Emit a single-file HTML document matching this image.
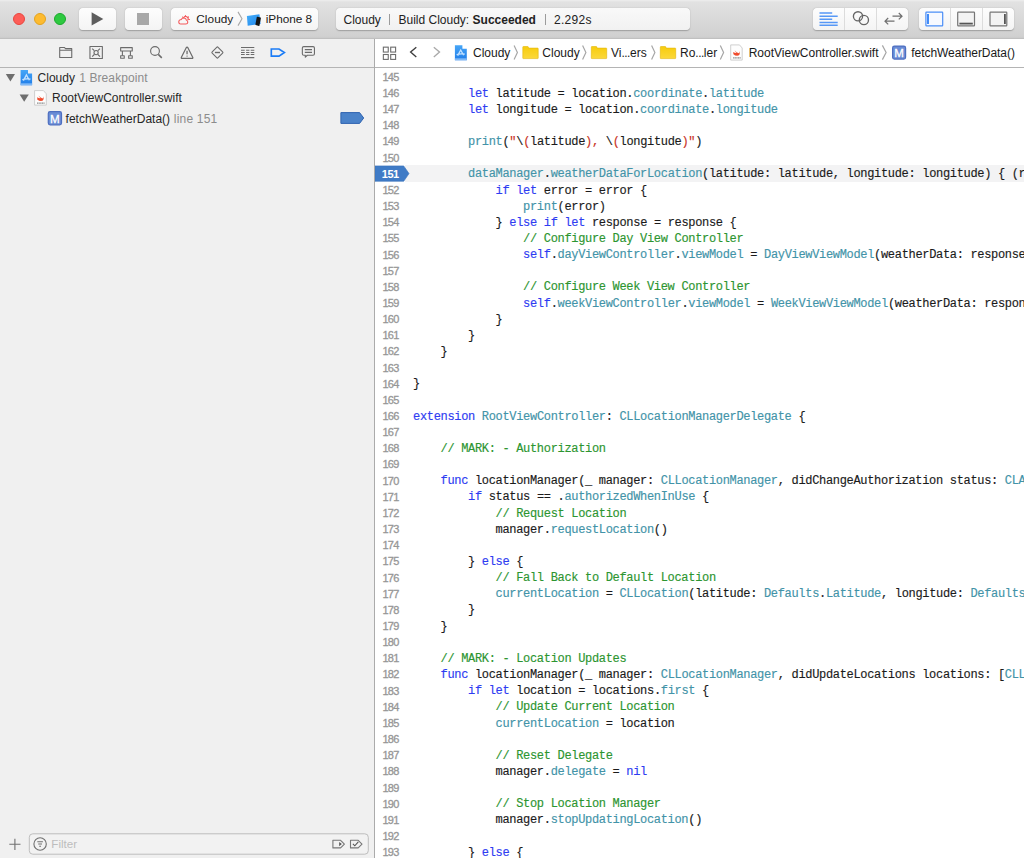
<!DOCTYPE html>
<html><head><meta charset="utf-8">
<style>
*{margin:0;padding:0;box-sizing:border-box}
html,body{width:1024px;height:858px;overflow:hidden;background:#fff;font-family:"Liberation Sans",sans-serif}
.abs{position:absolute}
svg{position:absolute;overflow:visible}
#toolbar{position:absolute;z-index:5;left:0;top:0;width:1024px;height:39px;background:linear-gradient(#eeeeee 0px,#e2e2e2 2px,#d1d1d1 36px,#cacaca 38px);border-bottom:1px solid #c0c0c0}
.light{position:absolute;top:13.3px;width:12px;height:12px;border-radius:50%}
.btn{position:absolute;top:8.2px;height:22px;background:linear-gradient(#fdfdfd,#f4f4f4);border-radius:4px;box-shadow:0 0.6px 1.3px rgba(0,0,0,.26),0 0 0.5px rgba(0,0,0,.2)}
.div{position:absolute;top:0;width:1px;height:100%;background:#dcdcdc}
#nav{position:absolute;left:0;top:38px;width:375px;height:820px;z-index:0;background:#f0f0f0;border-right:1px solid #ababab}
#navtabs{position:absolute;left:0;top:0;width:374px;height:30px;border-bottom:1px solid #b4b4b4}
.row{position:absolute;font-size:12px;color:#262626;white-space:nowrap}
.gray{color:#8c8c8c}
#jump{position:absolute;left:375px;top:38px;width:649px;height:30px;background:#fff;border-bottom:1px solid #b4b4b4}
.jt{position:absolute;top:8.4px;font-size:12px;color:#1a1a1a;white-space:nowrap}
#editor{position:absolute;left:375px;top:68px;width:649px;height:790px;background:#fff;overflow:hidden}
#lines{position:absolute;left:0;top:0;width:649px}
.ln{position:absolute;left:0;width:649px;height:16.15px;line-height:16.15px;white-space:pre;font-family:"Liberation Mono",monospace;font-size:12px;letter-spacing:-0.32px;color:#1b1b1b;-webkit-text-stroke:0.15px currentColor}
.ln.cur::before{content:"";position:absolute;left:30px;right:0;top:0;bottom:0;background:#f3f3f4}
.num{position:absolute;left:0;top:0.32px;width:23.5px;text-align:right;color:#969696;font-family:"Liberation Sans",sans-serif;font-size:11px;letter-spacing:-0.75px;-webkit-text-stroke:0.3px currentColor}
.code{position:absolute;left:38px;top:0.93px}
.k{color:#2e3cf2}
.t{color:#4293a8}
.c{color:#2c9530}
.s{color:#c93224}
</style></head><body>
<div id="toolbar">
  <div class="light" style="left:13.4px;background:#fd5d57;border:0.5px solid #e8463f"></div>
  <div class="light" style="left:33.7px;background:#fdbb30;border:0.5px solid #e3a31e"></div>
  <div class="light" style="left:53.9px;background:#2ec940;border:0.5px solid #1aa92c"></div>
  <div class="btn" style="left:79.1px;width:37px"><svg width="36" height="22" style="left:0;top:0"><path d="M12.6 4.3 L24.3 10.9 L12.6 17.6Z" fill="#5d5d5d"/></svg></div>
  <div class="btn" style="left:124.8px;width:37px"><div class="abs" style="left:12.5px;top:5.2px;width:12px;height:11.6px;background:#a8a8a8"></div></div>
  <div class="btn" style="left:170.5px;width:147.5px">
    <svg width="20" height="20" style="left:0;top:0"><g fill="none" stroke="#f4595b" stroke-width="1.25" stroke-linecap="round" transform="translate(7.4 13.2) scale(0.86) translate(-6.5 -12.5)"><path d="M9.5 15.8 H15.4 A2.3 2.3 0 0 0 16 11.3 A3.2 3.2 0 0 0 10 10.6 A2.6 2.6 0 0 0 9.5 15.8 Z" transform="translate(-0.2 0)"/><path d="M12.6 8.6 A2.6 2.6 0 0 1 17.6 10.8"/><path d="M14.7 5.9 V6.9 M11.3 7.6 L11.9 8.1 M18.2 7.4 L17.6 8 M19.4 10.5 H18.5"/></g></svg>
    <span class="abs" style="left:25.8px;top:4.2px;font-size:11.8px;color:#1b1b1b;letter-spacing:0.05px">Cloudy</span>
    <svg width="10" height="20" style="left:66px;top:3px"><path d="M1 0.9 L5 7.8 L1 14.6" fill="none" stroke="#a8a8a8" stroke-width="1.1"/></svg>
    <svg width="18" height="16" style="left:75.5px;top:4.8px"><defs><linearGradient id="ipg" x1="0" y1="0" x2="1" y2="1"><stop offset="0" stop-color="#45aef8"/><stop offset="1" stop-color="#1f86ee"/></linearGradient></defs><path d="M0.9 2.9 L13.4 1.2 L14.6 10.9 L1.7 12.7Z" fill="url(#ipg)"/><path d="M10.8 4 Q11 3.7 11.4 3.8 L14.6 4.6 Q15 4.8 14.9 5.2 L13.4 12.7 Q13.3 13.1 12.9 13 L9.7 12 Q9.3 11.9 9.4 11.5Z" fill="#141414"/></svg>
    <span class="abs" style="left:95.3px;top:4.3px;font-size:11.8px;color:#1b1b1b;letter-spacing:-0.05px">iPhone 8</span>
  </div>
  <div class="btn" style="left:335.5px;width:354px;background:linear-gradient(#f9f9f9,#f1f1f1)">
    <span class="abs" style="left:8px;top:5.1px;font-size:12px;color:#222;white-space:nowrap">Cloudy</span>
    <span class="abs" style="left:53.3px;top:5.4px;width:1px;height:11px;background:#9b9b9b"></span>
    <span class="abs" style="left:63px;top:5.1px;font-size:12px;color:#222;white-space:nowrap">Build Cloudy: <b>Succeeded</b></span>
    <span class="abs" style="left:209.3px;top:5.4px;width:1px;height:11px;background:#9b9b9b"></span>
    <span class="abs" style="left:218.5px;top:5.1px;font-size:12px;color:#222;white-space:nowrap;letter-spacing:0.3px">2.292s</span>
  </div>
  <div class="btn" style="left:812.5px;width:95.5px">
    <div class="div" style="left:31.5px"></div><div class="div" style="left:63.5px"></div>
    <svg width="30" height="20" style="left:0;top:0"><g stroke="#5798f6" stroke-width="1.5"><path d="M6.5 5 H19.2 M6.5 8.2 H24.7 M6.5 11.2 H19.2 M6.5 14.4 H24.7 M6.5 17.3 H24.7"/></g></svg>
    <svg width="30" height="20" style="left:32px;top:0"><g fill="none" stroke="#666" stroke-width="1.35"><circle cx="13" cy="8.3" r="4.6"/><circle cx="18.9" cy="12" r="4.6"/></g></svg>
    <svg width="30" height="20" style="left:64px;top:0"><g fill="none" stroke="#6f6f6f" stroke-width="1.2"><path d="M15.5 8.2 H25 M21.8 5 L25 8.2 L21.8 11.4"/><path d="M8 13.2 H17.5 M11.2 10 L8 13.2 L11.2 16.4"/></g></svg>
  </div>
  <div class="btn" style="left:918.5px;width:95px">
    <div class="div" style="left:31.5px"></div><div class="div" style="left:63.5px"></div>
    <svg width="30" height="20" style="left:-0.5px;top:-0.4px"><rect x="7.9" y="4.2" width="16.8" height="13.7" rx="0.6" fill="#f6f9ff" stroke="#4a8ef7" stroke-width="1.2"/><path d="M10 6 V16" stroke="#2f7ff6" stroke-width="1.8"/></svg>
    <svg width="30" height="20" style="left:31.5px;top:-0.4px"><rect x="7.7" y="4.2" width="16.8" height="13.7" rx="0.6" fill="#f3f3f3" stroke="#767676" stroke-width="1.2"/><path d="M9.4 15.6 H22.8" stroke="#555" stroke-width="1.8"/></svg>
    <svg width="30" height="20" style="left:63.5px;top:-0.4px"><rect x="8" y="4.2" width="16.8" height="13.7" rx="0.6" fill="#f3f3f3" stroke="#767676" stroke-width="1.2"/><path d="M22.9 6 V16" stroke="#555" stroke-width="1.8"/></svg>
  </div>
</div>
<div id="nav">
  <div id="navtabs">
<svg width="374" height="30" style="left:0;top:0"><g fill="none" stroke="#6b6b6b" stroke-width="1.1" stroke-linejoin="round">
<path d="M59.7 19.55 V9.45 H64.3 L65.5 10.65 H71.75 V19.55 Z M59.7 12.3 H71.75"/>
<rect x="89.95" y="8.45" width="12.4" height="12.1"/>
<circle cx="96.1" cy="14.6" r="2.1"/>
<path d="M92.2 10.6 L94.3 12.7 M100 10.6 L97.9 12.7 M92.2 18.6 L94.3 16.5 M100 18.6 L97.9 16.5"/>
<rect x="120.65" y="9.65" width="11.6" height="3.3"/>
<rect x="120.65" y="17.75" width="3.6" height="2.5"/>
<rect x="128.65" y="17.75" width="3.6" height="2.5"/>
<path d="M122.4 12.95 V17.75 M130.4 12.95 V17.75"/>
<circle cx="155" cy="13" r="4.4"/>
<path d="M158.3 16.4 L161.8 19.9" stroke-width="1.5"/>
<path d="M186.1 9.9 Q187.05 8.4 188 9.9 L192.7 19.2 Q193.3 20.4 192 20.4 H182.1 Q180.8 20.4 181.4 19.2 Z" stroke-width="1.2"/>
<path d="M187.05 12.8 V16.3" stroke-width="1.3"/><circle cx="187.05" cy="18.1" r="0.65" fill="#6b6b6b" stroke="none"/>
<path d="M212.2 13.8 L216.7 9.3 Q217.4 8.6 218.1 9.3 L222.6 13.8 Q223.3 14.5 222.6 15.2 L218.1 19.7 Q217.4 20.4 216.7 19.7 L212.2 15.2 Q211.5 14.5 212.2 13.8 Z"/>
<path d="M214.9 14.5 H220" stroke-width="1.4"/>
<path d="M241 9.4 H254.3 M241 19.6 H254.3 M241 12.3 H244.7 M246.1 12.3 H249.4 M250.7 12.3 H254.3 M241 14.4 H244.7 M246.1 14.4 H249.4 M250.7 14.4 H254.3 M241 16.4 H244.7 M246.1 16.4 H249.4 M250.7 16.4 H254.3" stroke-width="1.05"/>
<path d="M303.8 8.65 H313 Q314.45 8.65 314.45 10.1 V15.8 Q314.45 17.25 313 17.25 H307.3 L305.3 19.2 V17.25 H303.8 Q302.35 17.25 302.35 15.8 V10.1 Q302.35 8.65 303.8 8.65 Z"/>
<path d="M304.8 11.6 H312 M304.8 14.4 H312" stroke-width="1.2"/>
</g>
<path d="M271.3 10.95 H279 L284.4 14.55 L279 18.15 H271.3 Z" fill="none" stroke="#1b7cf6" stroke-width="1.65" stroke-linejoin="miter"/>
</svg>
  </div>
<svg width="374" height="820" style="left:0;top:0">
<path d="M5.8 36.1 H15 L10.4 43.4 Z" fill="#6e6e6e"/>
<path d="M19.6 56.5 H28.8 L24.2 63.8 Z" fill="#6e6e6e"/>
<defs><linearGradient id="ag" x1="0" y1="0" x2="0" y2="1"><stop offset="0" stop-color="#46a6f7"/><stop offset="1" stop-color="#1f7ce8"/></linearGradient></defs>
<path d="M20.6 32.1 H28 V35.6 H32.1 V47.2 H20.6 Z" fill="url(#ag)"/>
<path d="M20.6 45.3 H32.1 V47.2 H20.6Z" fill="#80b9f6"/>
<path d="M23.4 42.6 L26.4 36.9 L29.3 42.3 M22.3 41.6 Q26.4 40.4 30.5 41.2" fill="none" stroke="#c4e2ff" stroke-width="1.3"/>
<path d="M34.6 52.6 H43.4 L46.3 55.8 V67.1 H34.6 Z" fill="#fdfdfd" stroke="#c4c4c4" stroke-width="0.8"/>
<path d="M37 61.2 Q40.2 64 42.9 62.6 Q44 61.4 43.5 58.2 Q43.4 60 42.4 60.6 Q40.2 59.4 38.4 57.5 Q39.4 59.1 40.5 60.3 Q39 60.5 37 59.2 Q37.8 60.6 37 61.2Z" fill="#f04a2c"/>
<path d="M37 65.1 H44.6" stroke="#8a8a8a" stroke-width="1.2" stroke-dasharray="1.2 0.4"/>
<rect x="48.3" y="73.6" width="13.2" height="13.2" rx="1.8" fill="#6a8cd5" stroke="#4d6ec0" stroke-width="1.2"/>
<text x="54.9" y="84.5" font-family="Liberation Sans" font-size="11.6" fill="#fff" stroke="#fff" stroke-width="0.3" text-anchor="middle">M</text>
<path d="M340.9 74.6 H359.6 L363.7 80 L359.6 85.4 H340.9 Z" fill="#4a82c9" stroke="#2f63b0" stroke-width="1"/>
<g fill="none" stroke="#707070" stroke-width="1.1"><path d="M9.3 806.3 H20.5 M14.9 800.7 V811.9"/></g>
<rect x="29.3" y="795.8" width="339" height="20.4" rx="3.5" fill="#f2f2f2" stroke="#bdbdbd" stroke-width="1"/>
<circle cx="40.1" cy="806" r="6.2" fill="none" stroke="#707070" stroke-width="1.1"/>
<path d="M37.3 803.8 H42.9 M38.2 806 H42 M39.2 808.3 H41" stroke="#707070" stroke-width="1.1"/>
<path d="M332.9 802.3 H340.6 L344.4 806.1 L340.6 809.9 H332.9 Z" fill="none" stroke="#777" stroke-width="1.1" stroke-linejoin="round"/>
<path d="M339.2 803.9 L341.8 806.1 L339.2 808.3 Z" fill="#555"/>
<path d="M350.5 802.3 H358.2 L362 806.1 L358.2 809.9 H350.5 Z" fill="none" stroke="#777" stroke-width="1.1" stroke-linejoin="round"/>
<path d="M352.9 805.8 L354.8 807.8 L358.3 803.8" fill="none" stroke="#555" stroke-width="1.1"/>
</svg>
  <div class="row" style="left:37.6px;top:32.7px">Cloudy<span class="gray" style="position:absolute;left:41.6px;letter-spacing:0.1px">1 Breakpoint</span></div>
  <div class="row" style="left:52px;top:53.1px">RootViewController.swift</div>
  <div class="row" style="left:65.6px;top:73.6px">fetchWeatherData()<span class="gray" style="position:absolute;left:108.2px;letter-spacing:0.2px">line 151</span></div>
  <div class="row" style="left:51.3px;top:798.7px;color:#bdbdbd;font-size:11.6px">Filter</div>

</div>
<div id="jump">
<svg width="649" height="30" style="left:0;top:0">
<g fill="none" stroke="#6c6c6c" stroke-width="1.1">
<rect x="8.35" y="9.15" width="4.9" height="4.9"/><rect x="15.7" y="9.15" width="4.9" height="4.9"/>
<rect x="8.35" y="16.5" width="4.9" height="4.9"/><rect x="15.7" y="16.5" width="4.9" height="4.9"/>
<path d="M41.3 9.2 L35.6 14.1 L41.3 19" stroke="#3c3c3c" stroke-width="1.35"/>
<path d="M58.8 9.2 L64.5 14.1 L58.8 19" stroke="#a9a9a9" stroke-width="1.35"/>
<path d="M139.1 7.4 L142.4 14.5 L139.1 21.6" stroke="#a6a6a6" stroke-width="1.2"/>
<path d="M207.6 7.4 L210.9 14.5 L207.6 21.6" stroke="#a6a6a6" stroke-width="1.2"/>
<path d="M276.6 7.4 L279.9 14.5 L276.6 21.6" stroke="#a6a6a6" stroke-width="1.2"/>
<path d="M345.3 7.4 L348.6 14.5 L345.3 21.6" stroke="#a6a6a6" stroke-width="1.2"/>
<path d="M507.4 7.4 L511.1 14.5 L507.4 21.6" stroke="#a6a6a6" stroke-width="1.2"/>
</g>
<path d="M79.9 7.2 H87.4 V10.8 H91.8 V22.2 H79.9 Z" fill="url(#ag2)"/>
<defs><linearGradient id="ag2" x1="0" y1="0" x2="0" y2="1"><stop offset="0" stop-color="#46a6f7"/><stop offset="1" stop-color="#1f7ce8"/></linearGradient>
<linearGradient id="fg" x1="0" y1="0" x2="0" y2="1"><stop offset="0" stop-color="#f7cc0c"/><stop offset="1" stop-color="#fbd83a"/></linearGradient></defs>
<path d="M82.7 17.6 L85.7 12 L88.6 17.3 M81.6 16.6 Q85.7 15.4 89.8 16.2" fill="none" stroke="#c4e2ff" stroke-width="1.3"/>
<path d="M79.9 20.3 H91.8 V22.2 H79.9Z" fill="#80b9f6"/>
<path d="M147.8 9.1 Q147.8 8.5 148.4 8.5 H152.7 Q153.2 8.5 153.4 9.1 L153.6 10.1 H162.7 Q163.2 10.1 163.2 10.6 V20.1 Q163.2 20.6 162.7 20.6 H148.3 Q147.8 20.6 147.8 20.1 Z" fill="url(#fg)" stroke="#e2b50a" stroke-width="0.6"/><path d="M216.3 9.1 Q216.3 8.5 216.9 8.5 H221.2 Q221.7 8.5 221.9 9.1 L222.1 10.1 H231.2 Q231.7 10.1 231.7 10.6 V20.1 Q231.7 20.6 231.2 20.6 H216.8 Q216.3 20.6 216.3 20.1 Z" fill="url(#fg)" stroke="#e2b50a" stroke-width="0.6"/><path d="M285.3 9.1 Q285.3 8.5 285.9 8.5 H290.2 Q290.7 8.5 290.9 9.1 L291.1 10.1 H300.2 Q300.7 10.1 300.7 10.6 V20.1 Q300.7 20.6 300.2 20.6 H285.8 Q285.3 20.6 285.3 20.1 Z" fill="url(#fg)" stroke="#e2b50a" stroke-width="0.6"/>
<path d="M355.7 6.9 H364.5 L367.2 10 V22.1 H355.7 Z" fill="#fdfdfd" stroke="#c4c4c4" stroke-width="0.8"/>
<path d="M358.1 15.9 Q361.3 18.7 364 17.3 Q365.1 16.1 364.6 12.9 Q364.5 14.7 363.5 15.3 Q361.3 14.1 359.5 12.2 Q360.5 13.8 361.6 15 Q360.1 15.2 358.1 13.9 Q358.9 15.3 358.1 15.9Z" fill="#f04a2c"/>
<path d="M358.1 19.9 H365.7" stroke="#8a8a8a" stroke-width="1.2" stroke-dasharray="1.2 0.4"/>
<rect x="517.6" y="8.1" width="13" height="13" rx="1.8" fill="#6a8cd5" stroke="#4d6ec0" stroke-width="1.2"/>
<text x="524.1" y="18.9" font-family="Liberation Sans" font-size="11.5" fill="#fff" stroke="#fff" stroke-width="0.3" text-anchor="middle">M</text>
</svg>
  <span class="jt" style="left:98px">Cloudy</span>
  <span class="jt" style="left:167.3px">Cloudy</span>
  <span class="jt" style="left:236px">Vi<span style="letter-spacing:-0.5px">...</span>ers</span>
  <span class="jt" style="left:305px">Ro<span style="letter-spacing:-0.5px">...</span>ler</span>
  <span class="jt" style="left:373.7px">RootViewController.swift</span>
  <span class="jt" style="left:536.3px;letter-spacing:-0.05px">fetchWeatherData()</span>

</div>
<div id="editor"><div id="lines">
<div class="ln" style="top:0.550px"><span class="num">145</span><span class="code"></span></div>
<div class="ln" style="top:16.701px"><span class="num">146</span><span class="code">        <span class="k">let</span> latitude = location.<span class="t">coordinate</span>.<span class="t">latitude</span></span></div>
<div class="ln" style="top:32.852px"><span class="num">147</span><span class="code">        <span class="k">let</span> longitude = location.<span class="t">coordinate</span>.<span class="t">longitude</span></span></div>
<div class="ln" style="top:49.003px"><span class="num">148</span><span class="code"></span></div>
<div class="ln" style="top:65.154px"><span class="num">149</span><span class="code">        <span class="t">print</span>(<span class="s">&quot;</span>\<span class="s">(</span>latitude<span class="s">), </span>\<span class="s">(</span>longitude<span class="s">)&quot;</span>)</span></div>
<div class="ln" style="top:81.305px"><span class="num">150</span><span class="code"></span></div>
<div class="ln cur" style="top:97.456px"><svg width="40" height="17" style="left:0;top:0"><path d="M0 0.9 H28.7 L34 8.6 L28.7 16.3 H0 Z" fill="#3f7bc6" stroke="#3a72bb" stroke-width="0.6"/></svg><span class="num" style="color:#fff;font-weight:bold;top:0.2px;width:23.7px;letter-spacing:-0.5px;-webkit-text-stroke:0">151</span><span class="code">        <span class="t">dataManager</span>.<span class="t">weatherDataForLocation</span>(latitude: latitude, longitude: longitude) { (r</span></div>
<div class="ln" style="top:113.607px"><span class="num">152</span><span class="code">            <span class="k">if</span> <span class="k">let</span> error = error {</span></div>
<div class="ln" style="top:129.758px"><span class="num">153</span><span class="code">                <span class="t">print</span>(error)</span></div>
<div class="ln" style="top:145.909px"><span class="num">154</span><span class="code">            } <span class="k">else</span> <span class="k">if</span> <span class="k">let</span> response = response {</span></div>
<div class="ln" style="top:162.060px"><span class="num">155</span><span class="code">                <span class="c">// Configure Day View Controller</span></span></div>
<div class="ln" style="top:178.211px"><span class="num">156</span><span class="code">                <span class="k">self</span>.<span class="t">dayViewController</span>.<span class="t">viewModel</span> = <span class="t">DayViewViewModel</span>(weatherData: response</span></div>
<div class="ln" style="top:194.362px"><span class="num">157</span><span class="code"></span></div>
<div class="ln" style="top:210.513px"><span class="num">158</span><span class="code">                <span class="c">// Configure Week View Controller</span></span></div>
<div class="ln" style="top:226.664px"><span class="num">159</span><span class="code">                <span class="k">self</span>.<span class="t">weekViewController</span>.<span class="t">viewModel</span> = <span class="t">WeekViewViewModel</span>(weatherData: respon</span></div>
<div class="ln" style="top:242.815px"><span class="num">160</span><span class="code">            }</span></div>
<div class="ln" style="top:258.966px"><span class="num">161</span><span class="code">        }</span></div>
<div class="ln" style="top:275.117px"><span class="num">162</span><span class="code">    }</span></div>
<div class="ln" style="top:291.268px"><span class="num">163</span><span class="code"></span></div>
<div class="ln" style="top:307.419px"><span class="num">164</span><span class="code">}</span></div>
<div class="ln" style="top:323.570px"><span class="num">165</span><span class="code"></span></div>
<div class="ln" style="top:339.721px"><span class="num">166</span><span class="code"><span class="k">extension</span> <span class="t">RootViewController</span>: <span class="t">CLLocationManagerDelegate</span> {</span></div>
<div class="ln" style="top:355.872px"><span class="num">167</span><span class="code"></span></div>
<div class="ln" style="top:372.023px"><span class="num">168</span><span class="code">    <span class="c">// MARK: - Authorization</span></span></div>
<div class="ln" style="top:388.174px"><span class="num">169</span><span class="code"></span></div>
<div class="ln" style="top:404.325px"><span class="num">170</span><span class="code">    <span class="k">func</span> locationManager(_ manager: <span class="t">CLLocationManager</span>, didChangeAuthorization status: <span class="t">CLA</span></span></div>
<div class="ln" style="top:420.476px"><span class="num">171</span><span class="code">        <span class="k">if</span> status == .<span class="t">authorizedWhenInUse</span> {</span></div>
<div class="ln" style="top:436.627px"><span class="num">172</span><span class="code">            <span class="c">// Request Location</span></span></div>
<div class="ln" style="top:452.778px"><span class="num">173</span><span class="code">            manager.<span class="t">requestLocation</span>()</span></div>
<div class="ln" style="top:468.929px"><span class="num">174</span><span class="code"></span></div>
<div class="ln" style="top:485.080px"><span class="num">175</span><span class="code">        } <span class="k">else</span> {</span></div>
<div class="ln" style="top:501.231px"><span class="num">176</span><span class="code">            <span class="c">// Fall Back to Default Location</span></span></div>
<div class="ln" style="top:517.382px"><span class="num">177</span><span class="code">            <span class="t">currentLocation</span> = <span class="t">CLLocation</span>(latitude: <span class="t">Defaults</span>.<span class="t">Latitude</span>, longitude: <span class="t">Defaults</span></span></div>
<div class="ln" style="top:533.533px"><span class="num">178</span><span class="code">        }</span></div>
<div class="ln" style="top:549.684px"><span class="num">179</span><span class="code">    }</span></div>
<div class="ln" style="top:565.835px"><span class="num">180</span><span class="code"></span></div>
<div class="ln" style="top:581.986px"><span class="num">181</span><span class="code">    <span class="c">// MARK: - Location Updates</span></span></div>
<div class="ln" style="top:598.137px"><span class="num">182</span><span class="code">    <span class="k">func</span> locationManager(_ manager: <span class="t">CLLocationManager</span>, didUpdateLocations locations: [<span class="t">CLL</span></span></div>
<div class="ln" style="top:614.288px"><span class="num">183</span><span class="code">        <span class="k">if</span> <span class="k">let</span> location = locations.<span class="t">first</span> {</span></div>
<div class="ln" style="top:630.439px"><span class="num">184</span><span class="code">            <span class="c">// Update Current Location</span></span></div>
<div class="ln" style="top:646.590px"><span class="num">185</span><span class="code">            <span class="t">currentLocation</span> = location</span></div>
<div class="ln" style="top:662.741px"><span class="num">186</span><span class="code"></span></div>
<div class="ln" style="top:678.892px"><span class="num">187</span><span class="code">            <span class="c">// Reset Delegate</span></span></div>
<div class="ln" style="top:695.043px"><span class="num">188</span><span class="code">            manager.<span class="t">delegate</span> = <span class="k">nil</span></span></div>
<div class="ln" style="top:711.194px"><span class="num">189</span><span class="code"></span></div>
<div class="ln" style="top:727.345px"><span class="num">190</span><span class="code">            <span class="c">// Stop Location Manager</span></span></div>
<div class="ln" style="top:743.496px"><span class="num">191</span><span class="code">            manager.<span class="t">stopUpdatingLocation</span>()</span></div>
<div class="ln" style="top:759.647px"><span class="num">192</span><span class="code"></span></div>
<div class="ln" style="top:775.798px"><span class="num">193</span><span class="code">        } <span class="k">else</span> {</span></div>
</div></div>
</body></html>
